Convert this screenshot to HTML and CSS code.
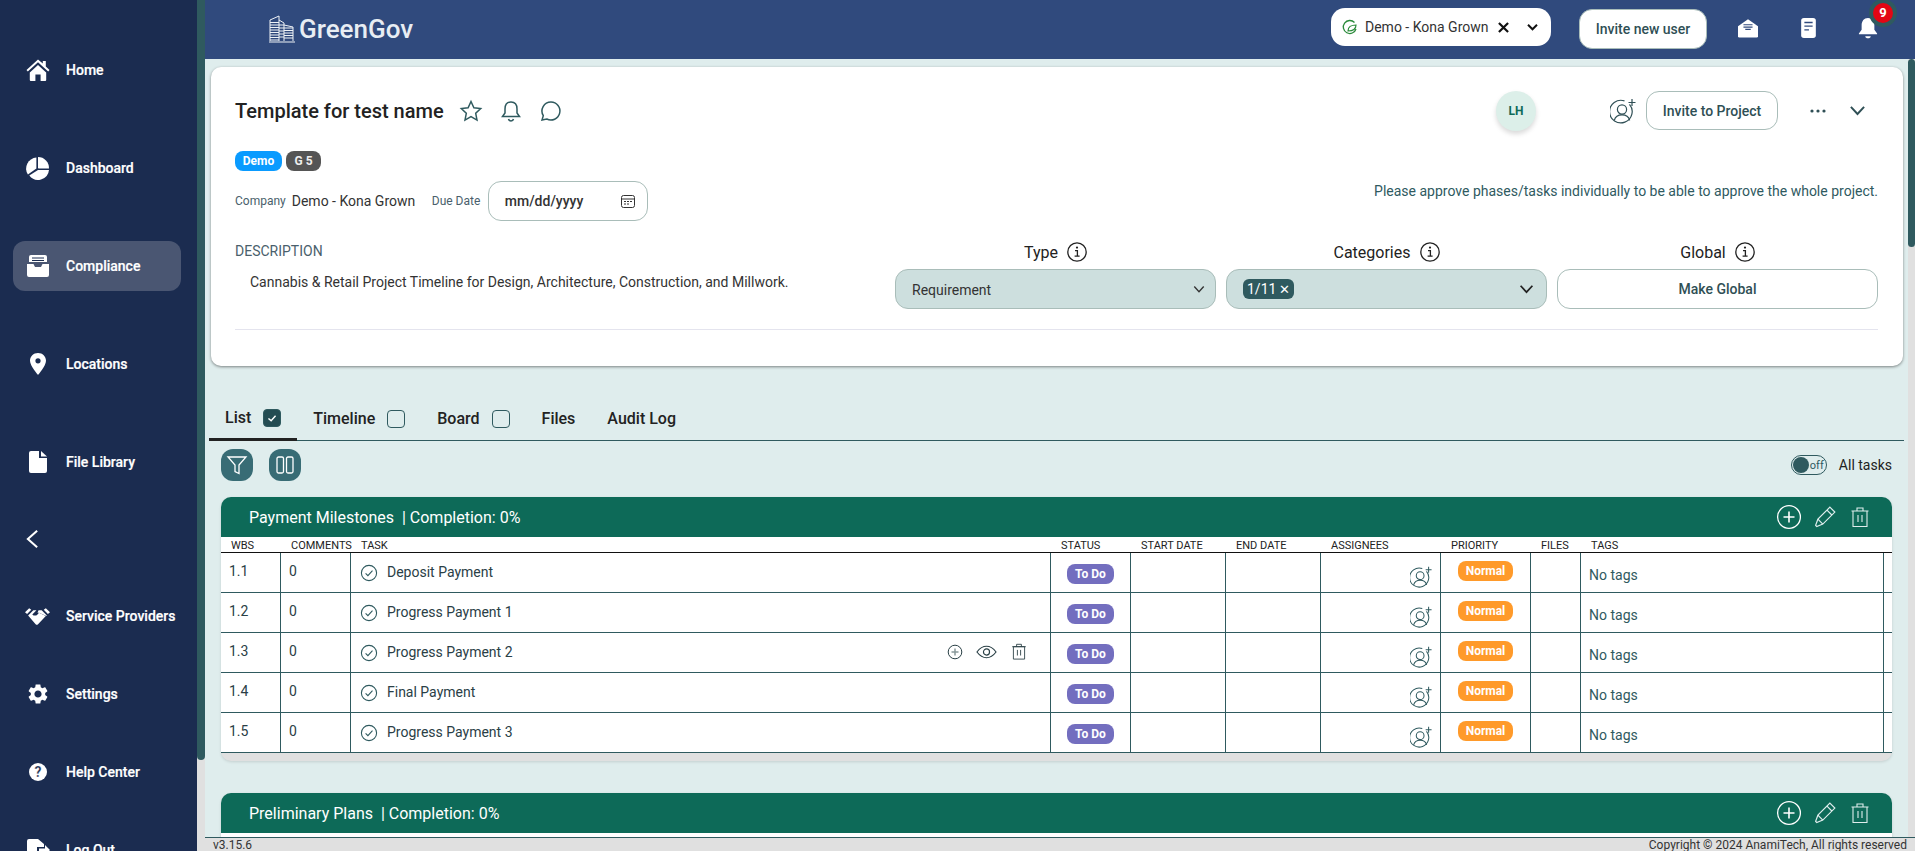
FILE: index.html
```html
<!DOCTYPE html>
<html lang="en">
<head>
<meta charset="utf-8">
<title>GreenGov</title>
<link rel="stylesheet" href="styles.css">
</head>
<body>
<svg class="sprite" width="0" height="0" aria-hidden="true">
  <symbol id="i-adduser" viewBox="0 0 26 26">
    <path d="M19.500 6.300A11.300 11.300 0 1 1 14.500 2.900" fill="none" stroke="currentColor" stroke-width="1.200"/>
    <circle cx="12" cy="11.500" r="4.600" fill="none" stroke="currentColor" stroke-width="1.200"/>
    <path d="M4.300 22.300c1-3.800 4.200-5.500 7.700-5.500s6.700 1.700 7.700 5.500" fill="none" stroke="currentColor" stroke-width="1.200"/>
    <path d="M22 1v7M18.500 4.500h7" stroke="currentColor" stroke-width="1.200"/>
  </symbol>
  <symbol id="i-info" viewBox="0 0 20 20">
    <circle cx="10" cy="10" r="9.200" fill="none" stroke="currentColor" stroke-width="1.300"/>
    <path d="M8 8.600h2.400v5.400M7.600 14.200h5" fill="none" stroke="currentColor" stroke-width="1.300"/>
    <circle cx="10" cy="5.600" r="1.100" fill="currentColor"/>
  </symbol>
  <symbol id="i-check" viewBox="0 0 18 18">
    <circle cx="9" cy="9" r="7.600" fill="none" stroke="currentColor" stroke-width="1.100"/>
    <path d="M5.600 9.400l2.300 2.300 4.600-5" fill="none" stroke="currentColor" stroke-width="1.100"/>
  </symbol>
  <symbol id="i-plus" viewBox="0 0 26 26">
    <circle cx="13" cy="13" r="11.400" fill="none" stroke="currentColor" stroke-width="1.300"/>
    <path d="M13 7.500v11M7.500 13h11" stroke="currentColor" stroke-width="1.600"/>
  </symbol>
  <symbol id="i-pencil" viewBox="0 0 22 22">
    <path d="M15.500 2l4.500 4.500L9 17.500l-5.600 2.200-1-1L4.500 13Z" fill="none" stroke="currentColor" stroke-width="1.100"/>
    <path d="M12.800 4.700l4.500 4.500M4.500 13l4.500 4.500" fill="none" stroke="currentColor" stroke-width="1.100"/>
  </symbol>
  <symbol id="i-trash" viewBox="0 0 20 22">
    <path d="M3 5h14v15.500H3ZM1.500 5h17M7 5V2h6v3M8 9v7M12 9v7" fill="none" stroke="currentColor" stroke-width="1.100"/>
  </symbol>
  <symbol id="i-chev" viewBox="0 0 14 10">
    <path d="M1.500 1.500l5.500 6 5.500-6" fill="none" stroke="currentColor" stroke-width="1.600"/>
  </symbol>
</svg>

<div class="app">
  <nav class="sidebar">
    <div class="nav-group nav-top">
      <a class="nav-item"><svg class="nav-icon" viewBox="0 0 24 24"><path fill="#fff" d="M12 1.500 .5 12l1.300 1.400L12 4.200l10.200 9.200 1.300-1.400-3.700-3.400V3h-3v2.600Z"/><path fill="#fff" d="M3.800 14.400 12 7l8.200 7.400V22a1 1 0 0 1-1 1h-4.600v-6.500H9.400V23H4.800a1 1 0 0 1-1-1Z"/></svg><span>Home</span></a>
      <a class="nav-item"><svg class="nav-icon" viewBox="0 0 24 24"><path fill="#fff" d="M10.400 1.600v11l-8.500 6A11 11 0 0 1 10.400 1.600Z"/><path fill="#fff" d="M12 1a11 11 0 0 1 11 11.500H12.500L12 12Z"/><path fill="#fff" d="M23 14a11 11 0 0 1-19.700 5.500L12 14Z"/></svg><span>Dashboard</span></a>
      <a class="nav-item is-active"><svg class="nav-icon" viewBox="0 0 24 24"><path fill="#fff" d="M5 1h14a2 2 0 0 1 2 2v5H3V3a2 2 0 0 1 2-2Z"/><path fill="#1b2c50" d="M6 3.500h12v1H6ZM6 6h12v1H6Z"/><path fill="#fff" d="M1 10h6.500l1.500 3h6l1.500-3H23v11a2 2 0 0 1-2 2H3a2 2 0 0 1-2-2Z"/></svg><span>Compliance</span></a>
      <a class="nav-item"><svg class="nav-icon" viewBox="0 0 24 24"><path fill="#fff" fill-rule="evenodd" d="M12 1c4.600 0 8 3.400 8 7.800C20 14 12 23 12 23S4 14 4 8.800C4 4.400 7.400 1 12 1Zm0 5.200a2.600 2.600 0 1 0 0 5.200 2.600 2.600 0 0 0 0-5.200Z"/></svg><span>Locations</span></a>
      <a class="nav-item"><svg class="nav-icon" viewBox="0 0 24 24"><path fill="#fff" d="M5 1h8v7h8v13a2 2 0 0 1-2 2H5a2 2 0 0 1-2-2V3a2 2 0 0 1 2-2Z"/><path fill="#fff" d="M15 1l6 5.500h-6Z"/></svg><span>File Library</span></a>
    </div>
    <div class="collapse"><svg class="collapse-icon" viewBox="0 0 14 22"><path d="M12 2 2 11l10 9" fill="none" stroke="#fff" stroke-width="2.200"/></svg></div>
    <div class="nav-group nav-bottom">
      <a class="nav-item"><svg class="nav-icon nav-icon-wide" viewBox="0 0 24 16"><path fill="#fff" d="M0 4l4-4 2 1.500-4 4ZM24 4l-4-4-2 1.500 4 4Z"/><path fill="#fff" d="M3 7l5-5h3L7 6c1.500 1.500 3.500 1.500 5 0l1.500-1.500 6.500 3-7.500 8c-.8.700-1.500.700-2.300 0Z"/><path fill="#fff" d="M13 2h3l5 5-.5.500-7-3.200h-1.500Z"/></svg><span>Service Providers</span></a>
      <a class="nav-item"><svg class="nav-icon" viewBox="0 0 24 24"><path fill="#fff" d="M19.140 12.940c.04-.3.06-.61.06-.94 0-.32-.02-.64-.07-.94l2.030-1.580c.18-.14.23-.41.12-.61l-1.920-3.320c-.12-.22-.37-.29-.59-.22l-2.390.96c-.5-.38-1.030-.7-1.620-.94l-.36-2.540c-.04-.24-.24-.41-.48-.41h-3.840c-.24 0-.43.17-.47.41l-.36 2.540c-.59.24-1.130.57-1.620.94l-2.390-.96c-.22-.08-.47 0-.59.22L2.740 8.870c-.12.21-.08.47.12.61l2.030 1.580c-.05.3-.09.63-.09.94s.02.64.07.94l-2.030 1.580c-.18.14-.23.41-.12.61l1.920 3.320c.12.22.37.29.59.22l2.390-.96c.5.38 1.030.7 1.620.94l.36 2.540c.05.24.24.41.48.41h3.840c.24 0 .44-.17.47-.41l.36-2.540c.59-.24 1.130-.56 1.620-.94l2.390.96c.22.08.47 0 .59-.22l1.920-3.320c.12-.22.07-.47-.12-.61l-2.010-1.580zM12 15.600c-1.980 0-3.600-1.620-3.600-3.600s1.620-3.600 3.600-3.600 3.600 1.620 3.600 3.600-1.620 3.600-3.600 3.600z"/></svg><span>Settings</span></a>
      <a class="nav-item"><span class="help-icon">?</span><span>Help Center</span></a>
      <a class="nav-item"><svg class="nav-icon" viewBox="0 0 24 24"><path fill="#fff" d="M3 1h9l6 5v3h-7v6h7v6a2 2 0 0 1-2 2H3a2 2 0 0 1-2-2V3a2 2 0 0 1 2-2Z"/><path fill="#fff" d="M13 10.500h6V7l5 5-5 5v-3.500h-6Z"/></svg><span>Log Out</span></a>
    </div>
  </nav>
  <div class="rail"><div class="rail-thumb"></div></div>

  <div class="main">
    <header class="topbar">
      <div class="logo">
        <svg class="logo-mark" viewBox="0 0 28 30">
          <g fill="none" stroke="#eef2f6" stroke-width="1">
            <path d="M2 27V6l9-4v25M11 6l5 3v18M16 11l9 2v14M1 28h26"/>
            <path d="M2 8.500h9M2 11h9M2 13.500h9M2 16h9M2 18.500h9M2 21h9M2 23.500h9M2 26h9M16 14h9M16 16.500h9M16 19h9M16 21.500h9M16 24h9M11 11h5M11 14h5M11 17h5M11 20h5M11 23h5"/>
          </g>
        </svg>
        <span class="logo-text">GreenGov</span>
      </div>
      <div class="org-select">
        <svg class="org-leaf" viewBox="0 0 16 16"><path d="M12.500 3.500A6.500 6.500 0 1 0 14 10" fill="none" stroke="#2a8a3a" stroke-width="1.300"/><path d="M6 12c0-4 3-6 8-6 0 4-3 6-8 6Z" fill="none" stroke="#2a8a3a" stroke-width="1.200"/></svg>
        <span class="org-name">Demo - Kona Grown</span>
        <svg class="org-x" viewBox="0 0 12 12"><path d="M1 1l10 10M11 1L1 11" stroke="#111" stroke-width="2.400"/></svg>
        <svg class="org-chev" viewBox="0 0 14 10"><path d="M2 2l5 5 5-5" fill="none" stroke="#111" stroke-width="2.200"/></svg>
      </div>
      <button class="invite-user">Invite new user</button>
      <svg class="top-icon top-mail" viewBox="0 0 24 22"><path fill="#fff" d="M1 9l11-7.500L23 9v11a1.500 1.500 0 0 1-1.500 1.500h-19A1.500 1.500 0 0 1 1 20Z"/><path d="M7 7.500h10M7 10h10M9 12.500h6" stroke="#304a7d" stroke-width="1.200"/></svg>
      <svg class="top-icon top-doc" viewBox="0 0 18 24"><rect x="1" y="1" width="16" height="22" rx="3" fill="#fff"/><path d="M4.500 6h9M4.500 10h9M4.500 14h5" stroke="#304a7d" stroke-width="1.500"/></svg>
      <div class="bell">
        <svg class="top-icon top-bell" viewBox="0 0 22 26"><path fill="#fff" d="M11 2c4.500 0 7 3.500 7 8v5l3 4v1H1v-1l3-4v-5c0-4.500 2.500-8 7-8Z"/><path fill="#fff" d="M8 22h6c0 3-6 3-6 0Z"/></svg>
        <span class="bell-count">9</span>
      </div>
    </header>

    <div class="body">
      <div class="content">
        <section class="card">
          <div class="card-top">
            <h1 class="title">Template for test name</h1>
            <svg class="title-icon star" viewBox="0 0 24 24"><path d="M12 2.500l2.900 6.300 6.800.8-5 4.700 1.300 6.800-6-3.400-6 3.400 1.300-6.800-5-4.700 6.800-.8Z" fill="none" stroke="#2f5a5f" stroke-width="1.500"/></svg>
            <svg class="title-icon" viewBox="0 0 24 24"><path d="M12 3c4 0 6 3 6 7v4l2.500 3.500h-17L6 14v-4c0-4 2-7 6-7ZM9.500 20c.5 2.500 4.500 2.500 5 0" fill="none" stroke="#2f5a5f" stroke-width="1.500"/></svg>
            <svg class="title-icon" viewBox="0 0 24 24"><path d="M12 3a9 9 0 1 1-4.200 17L3 21l1.300-4.300A9 9 0 0 1 12 3Z" fill="none" stroke="#2f5a5f" stroke-width="1.500"/></svg>
            <span class="avatar">LH</span>
            <svg class="add-user-top"><use href="#i-adduser"/></svg>
            <button class="invite-project">Invite to Project</button>
            <svg class="dots" viewBox="0 0 20 6"><circle cx="4" cy="3" r="1.600"/><circle cx="10" cy="3" r="1.600"/><circle cx="16" cy="3" r="1.600"/></svg>
            <svg class="card-chev"><use href="#i-chev"/></svg>
          </div>
          <div class="badges">
            <span class="badge badge-demo">Demo</span>
            <span class="badge badge-g">G 5</span>
          </div>
          <div class="meta">
            <span class="meta-label">Company</span>
            <span class="meta-value">Demo - Kona Grown</span>
            <span class="meta-label meta-due">Due Date</span>
            <div class="date-input">
              <span>mm/dd/yyyy</span>
              <svg class="cal" viewBox="0 0 16 16"><rect x="1.500" y="2.500" width="13" height="12" rx="2" fill="none" stroke="#333" stroke-width="1"/><path d="M1.500 6h13M4 8.500h2M7 8.500h2M10 8.500h2M4 11h2M7 11h2" stroke="#333" stroke-width="1"/></svg>
            </div>
            <span class="notice">Please approve phases/tasks individually to be able to approve the whole project.</span>
          </div>
          <div class="details">
            <div class="desc">
              <div class="desc-label">DESCRIPTION</div>
              <p class="desc-text">Cannabis &amp; Retail Project Timeline for Design, Architecture, Construction, and Millwork.</p>
            </div>
            <div class="field">
              <div class="field-label">Type<svg class="info"><use href="#i-info"/></svg></div>
              <div class="select"><span class="select-value">Requirement</span><svg class="select-chev"><use href="#i-chev"/></svg></div>
            </div>
            <div class="field">
              <div class="field-label">Categories<svg class="info"><use href="#i-info"/></svg></div>
              <div class="select"><span class="chip">1/11<span class="chip-x">&#10005;</span></span><svg class="select-chev strong"><use href="#i-chev"/></svg></div>
            </div>
            <div class="field">
              <div class="field-label">Global<svg class="info"><use href="#i-info"/></svg></div>
              <button class="make-global">Make Global</button>
            </div>
          </div>
          <div class="divider"></div>
        </section>

        <div class="tabs">
          <div class="tab is-active">List<span class="tab-box is-checked"><svg viewBox="0 0 18 18"><path d="M5 9.500l3 2.500 5-5.500" fill="none" stroke="#fff" stroke-width="1.600"/></svg></span></div>
          <div class="tab">Timeline<span class="tab-box"></span></div>
          <div class="tab">Board<span class="tab-box"></span></div>
          <div class="tab">Files</div>
          <div class="tab">Audit Log</div>
        </div>

        <div class="toolbar">
          <button class="tool"><svg viewBox="0 0 22 22"><path d="M2 3h18l-7 8v8.500l-4-2V11Z" fill="none" stroke="#fff" stroke-width="1.300"/></svg></button>
          <button class="tool"><svg viewBox="0 0 22 22"><rect x="3" y="3" width="6.500" height="16" rx="1.500" fill="none" stroke="#fff" stroke-width="1.300"/><rect x="12.500" y="3" width="6.500" height="16" rx="1.500" fill="none" stroke="#fff" stroke-width="1.300"/></svg></button>
          <div class="toggle-wrap">
            <span class="toggle"><span class="knob"></span><span class="toggle-text">off</span></span>
            <span class="toggle-label">All tasks</span>
          </div>
        </div>

        <section class="panel">
          <div class="panel-head">
            <span class="panel-title">Payment Milestones &nbsp;| Completion: 0%</span>
            <svg class="ph-plus"><use href="#i-plus"/></svg>
            <svg class="ph-pencil"><use href="#i-pencil"/></svg>
            <svg class="ph-trash"><use href="#i-trash"/></svg>
          </div>
          <div class="grid grid-head">
            <span>WBS</span><span>COMMENTS</span><span>TASK</span><span>STATUS</span><span>START DATE</span><span>END DATE</span><span>ASSIGNEES</span><span>PRIORITY</span><span>FILES</span><span>TAGS</span><span></span>
          </div>
          <div class="grid grid-row">
            <div class="cell c-num">1.1</div><div class="cell c-num">0</div>
            <div class="cell c-task"><svg class="task-check"><use href="#i-check"/></svg>Deposit Payment</div>
            <div class="cell c-status"><span class="pill todo">To Do</span></div><div class="cell"></div><div class="cell"></div>
            <div class="cell c-assign"><svg class="row-add"><use href="#i-adduser"/></svg></div>
            <div class="cell c-prio"><span class="pill normal">Normal</span></div><div class="cell"></div>
            <div class="cell c-tags">No tags</div><div class="cell c-last"></div>
          </div>
          <div class="grid grid-row">
            <div class="cell c-num">1.2</div><div class="cell c-num">0</div>
            <div class="cell c-task"><svg class="task-check"><use href="#i-check"/></svg>Progress Payment 1</div>
            <div class="cell c-status"><span class="pill todo">To Do</span></div><div class="cell"></div><div class="cell"></div>
            <div class="cell c-assign"><svg class="row-add"><use href="#i-adduser"/></svg></div>
            <div class="cell c-prio"><span class="pill normal">Normal</span></div><div class="cell"></div>
            <div class="cell c-tags">No tags</div><div class="cell c-last"></div>
          </div>
          <div class="grid grid-row">
            <div class="cell c-num">1.3</div><div class="cell c-num">0</div>
            <div class="cell c-task"><svg class="task-check"><use href="#i-check"/></svg>Progress Payment 2
              <span class="row-actions">
                <svg class="ra-plus" viewBox="0 0 16 16"><circle cx="8" cy="8" r="6.800" fill="none" stroke="currentColor"/><path d="M8 4.500v7M4.500 8h7" stroke="#8a9a9c" stroke-width="1.500"/></svg>
                <svg class="ra-eye" viewBox="0 0 22 14"><path d="M1 7c3-4 6-6 10-6s7 2 10 6c-3 4-6 6-10 6S4 11 1 7Z" fill="none" stroke="currentColor" stroke-width="1.200"/><circle cx="11" cy="7" r="3.200" fill="none" stroke="currentColor" stroke-width="1.200"/></svg>
                <svg class="ra-trash"><use href="#i-trash"/></svg>
              </span>
            </div>
            <div class="cell c-status"><span class="pill todo">To Do</span></div><div class="cell"></div><div class="cell"></div>
            <div class="cell c-assign"><svg class="row-add"><use href="#i-adduser"/></svg></div>
            <div class="cell c-prio"><span class="pill normal">Normal</span></div><div class="cell"></div>
            <div class="cell c-tags">No tags</div><div class="cell c-last"></div>
          </div>
          <div class="grid grid-row">
            <div class="cell c-num">1.4</div><div class="cell c-num">0</div>
            <div class="cell c-task"><svg class="task-check"><use href="#i-check"/></svg>Final Payment</div>
            <div class="cell c-status"><span class="pill todo">To Do</span></div><div class="cell"></div><div class="cell"></div>
            <div class="cell c-assign"><svg class="row-add"><use href="#i-adduser"/></svg></div>
            <div class="cell c-prio"><span class="pill normal">Normal</span></div><div class="cell"></div>
            <div class="cell c-tags">No tags</div><div class="cell c-last"></div>
          </div>
          <div class="grid grid-row">
            <div class="cell c-num">1.5</div><div class="cell c-num">0</div>
            <div class="cell c-task"><svg class="task-check"><use href="#i-check"/></svg>Progress Payment 3</div>
            <div class="cell c-status"><span class="pill todo">To Do</span></div><div class="cell"></div><div class="cell"></div>
            <div class="cell c-assign"><svg class="row-add"><use href="#i-adduser"/></svg></div>
            <div class="cell c-prio"><span class="pill normal">Normal</span></div><div class="cell"></div>
            <div class="cell c-tags">No tags</div><div class="cell c-last"></div>
          </div>
        </section>

        <section class="panel panel-next">
          <div class="panel-head">
            <span class="panel-title">Preliminary Plans &nbsp;| Completion: 0%</span>
            <svg class="ph-plus"><use href="#i-plus"/></svg>
            <svg class="ph-pencil"><use href="#i-pencil"/></svg>
            <svg class="ph-trash"><use href="#i-trash"/></svg>
          </div>
          <div class="grid grid-head"></div>
        </section>
      </div>
      <div class="vscroll"><div class="vscroll-thumb"></div></div>
    </div>

    <footer class="footer">
      <span>v3.15.6</span>
      <span>Copyright © 2024 AnamiTech, All rights reserved</span>
    </footer>
  </div>
</div>
</body>
</html>
```
FILE: styles.css
```css
* { box-sizing: border-box; }
html, body { margin: 0; height: 851px; overflow: hidden; }
body { font-family: Roboto, "Liberation Sans", sans-serif; color: #222; background: #dfeded; }
button { font-family: inherit; cursor: pointer; }
.sprite { position: absolute; }

.app { display: flex; height: 851px; overflow: hidden; }

/* Sidebar */
.sidebar { width: 197px; flex: none; background: #1b2c50; padding-top: 45px; overflow: hidden; }
.nav-group { display: flex; flex-direction: column; }
.nav-top { gap: 48px; }
.nav-bottom { gap: 28px; }
.nav-item { height: 50px; width: 168px; margin-left: 13px; padding-left: 13px; display: flex; align-items: center; gap: 16px; border-radius: 12px; color: #fff; font-size: 14px; font-weight: 500; -webkit-text-stroke: .2px #fff; }
.nav-item.is-active { background: #4a5672; }
.nav-icon { width: 24px; height: 24px; flex: none; }
.nav-icon-wide { width: 25px; height: 17px; margin-left: -1px; }
.help-icon { width: 18px; height: 18px; margin: 0 3px; flex: none; border-radius: 50%; background: #fff; color: #1b2c50; font-size: 14px; font-weight: 700; line-height: 18px; text-align: center; }
.collapse { height: 24px; margin: 40px 0 40px 26px; display: flex; align-items: center; }
.collapse-icon { width: 13px; height: 22px; }

.rail { width: 8px; flex: none; background: #e0e0e0; }
.rail-thumb { height: 760px; background: #2f5a5f; border-radius: 0 0 4px 4px; }

/* Main */
.main { flex: 1; min-width: 0; display: flex; flex-direction: column; height: 851px; }
.topbar { height: 59px; flex: none; background: #304a7d; display: flex; align-items: flex-start; padding-left: 63px; }
.logo { display: flex; align-items: center; height: 36px; margin-top: 11px; gap: 3px; }
.logo-mark { width: 28px; height: 32px; }
.logo-text { font-size: 26px; font-weight: 500; color: #e8edf3; width: 115px; white-space: nowrap; }
.org-select { width: 220px; height: 38px; margin: 8px 0 0 917px; background: #fff; border-radius: 14px; display: flex; align-items: center; padding-left: 11px; }
.org-leaf { width: 16px; height: 16px; flex: none; }
.org-name { font-size: 14px; color: #333; margin-left: 7px; width: 127px; white-space: nowrap; }
.org-x { width: 11px; height: 11px; margin-left: 6px; }
.org-chev { width: 13px; height: 9px; margin-left: 17px; }
.invite-user { width: 128px; height: 40px; margin: 9px 0 0 28px; background: #fff; border: 1px solid #a9bdb9; border-radius: 13px; font-size: 14px; font-weight: 500; color: #2f4f55; padding: 0; }
.top-icon { flex: none; }
.top-mail { width: 22px; height: 20px; margin: 18px 0 0 30px; }
.top-doc { width: 17px; height: 22px; margin: 17px 0 0 41px; }
.bell { display: flex; margin-left: 41px; position: relative; }
.top-bell { width: 20px; height: 24px; margin-top: 16px; }
.bell-count { position: absolute; left: 11px; top: -1px; width: 28px; height: 28px; background: #e30613; border: 4px solid #2f5a5f; border-radius: 50%; color: #fff; font-size: 13px; font-weight: 700; line-height: 20px; text-align: center; }

.body { flex: 1; min-height: 0; display: flex; }
.content { flex: 1; min-width: 0; padding: 8px 5px 0 6px; overflow: hidden; }
.vscroll { width: 7px; flex: none; background: #e0e0e0; }
.vscroll-thumb { height: 188px; background: #2f5a5f; border-radius: 4px; }

.footer { height: 14px; flex: none; background: #e0e0e0; border-top: 1px solid #2f5a5f; display: flex; justify-content: space-between; padding: 0 8px; font-size: 12px; line-height: 15px; color: #333; overflow: hidden; }

/* Card */
.card { height: 299px; background: #fff; border-radius: 10px; box-shadow: 0 1px 3px rgba(0,0,0,.45); padding: 24px 25px 0 24px; }
.card-top { display: flex; align-items: center; height: 39px; }
.title { margin: 0; font-size: 20px; font-weight: 500; color: #222; white-space: nowrap; width: 213px; }
.title-icon { width: 24px; height: 24px; margin-right: 16px; flex: none; }
.star { margin-left: 11px; }
.avatar { width: 40px; height: 40px; margin-left: 917px; flex: none; border-radius: 50%; background: #dcefe9; box-shadow: 0 3px 5px rgba(0,0,0,.15); color: #0d6a58; font-size: 12px; font-weight: 700; line-height: 40px; text-align: center; }
.add-user-top { width: 26px; height: 26px; margin-left: 74px; color: #2f4f55; flex: none; }
.invite-project { width: 132px; height: 39px; margin-left: 10px; background: #fff; border: 1px solid #a9bdb9; border-radius: 13px; font-size: 14px; font-weight: 500; color: #2f4f55; padding: 0; flex: none; }
.dots { width: 20px; height: 6px; margin-left: 30px; fill: #2f4f55; flex: none; }
.card-chev { width: 17px; height: 12px; margin-left: 21px; color: #2f4f55; flex: none; }

.badges { display: flex; gap: 4px; margin-top: 21px; }
.badge { height: 20px; border-radius: 8px; color: #fff; font-size: 12px; font-weight: 700; line-height: 20px; text-align: center; }
.badge-demo { width: 47px; background: #0a9bff; }
.badge-g { width: 35px; background: #555; color: #eee; }

.meta { display: flex; align-items: center; height: 40px; margin-top: 10px; }
.meta-label { font-size: 12px; color: #4a5f6c; white-space: nowrap; }
.meta-value { font-size: 14px; color: #333; margin-left: 6px; white-space: nowrap; width: 123px; }
.meta-due { margin-left: 17px; width: 56px; }
.date-input { width: 160px; height: 40px; border: 1px solid #a9bdb9; border-radius: 13px; display: flex; align-items: center; justify-content: space-between; padding: 0 11px 0 16px; font-size: 14px; font-weight: 500; color: #333; }
.cal { width: 16px; height: 16px; }
.notice { margin-left: auto; align-self: flex-start; font-size: 14px; line-height: 20px; color: #2f5a5f; white-space: nowrap; }

.details { display: flex; gap: 10px; margin-top: 21px; }
.desc { width: 650px; flex: none; }
.desc-label { font-size: 14px; line-height: 18px; color: #4a5f6c; }
.desc-text { margin: 12px 0 0; padding-left: 15px; font-size: 14px; line-height: 20px; color: #333; white-space: nowrap; }
.field { width: 321px; flex: none; }
.field-label { height: 20px; display: flex; justify-content: center; align-items: center; gap: 9px; font-size: 16px; color: #222; }
.info { width: 20px; height: 20px; color: #222; }
.select { height: 40px; margin-top: 7px; background: #cddfde; border: 1px solid #a9bdb9; border-radius: 13px; display: flex; align-items: center; justify-content: space-between; padding: 0 10px 0 16px; color: #333; }
.select-value { font-size: 14px; padding-top: 2px; }
.select-chev { width: 12px; height: 9px; color: #333; }
.select-chev.strong { width: 15px; height: 11px; margin-right: 2px; color: #222; }
.chip { background: #2f5a5f; color: #fff; font-size: 14px; line-height: 20px; height: 20px; padding: 0 4px; border-radius: 6px; white-space: nowrap; }
.chip-x { font-size: 13px; margin-left: 3px; }
.make-global { display: block; width: 100%; height: 40px; margin-top: 7px; background: #fff; border: 1px solid #a9bdb9; border-radius: 13px; font-size: 14px; font-weight: 500; color: #2f4f55; }
.divider { height: 1px; margin-top: 20px; background: #e4e4ee; }

/* Tabs */
.tabs { display: flex; height: 46px; margin: 29px -1px 0 -2px; border-bottom: 1px solid #2f5a5f; }
.tab { height: 46px; padding: 2px 16px 2px; display: flex; align-items: center; gap: 12px; font-size: 16px; font-weight: 500; color: #222; white-space: nowrap; }
.tab.is-active { border-bottom: 3px solid #222; padding-bottom: 0; }
.tab-box { width: 18px; height: 18px; border: 1px solid #2f5a5f; border-radius: 4px; margin-top: 1px; }
.tab-box.is-checked { background: #244c52; }
.tab-box svg { display: block; width: 16px; height: 16px; }

.toolbar { display: flex; align-items: center; gap: 16px; margin: 8px 11px 16px 10px; height: 32px; }
.tool { width: 32px; height: 32px; padding: 5px; background: #386c75; border: 0; border-radius: 12px; }
.tool svg { display: block; width: 22px; height: 22px; }
.toggle-wrap { margin-left: auto; display: flex; align-items: center; gap: 12px; }
.toggle { width: 36px; height: 20px; border: 1px solid #2f5a5f; border-radius: 10px; display: flex; align-items: center; padding-left: 1px; }
.knob { width: 16px; height: 16px; border-radius: 50%; background: #2f5a5f; flex: none; }
.toggle-text { font-size: 11px; color: #2f5a5f; margin-left: 1px; }
.toggle-label { font-size: 14px; color: #222; }

/* Panels */
.panel { margin: 0 11px 0 10px; background: #e0e0e0; border-radius: 10px; padding-bottom: 8px; box-shadow: 0 1px 3px rgba(0,0,0,.12); }
.panel-next { margin-top: 32px; }
.panel-head { height: 40px; background: #0d6a58; border-radius: 10px 10px 0 0; display: flex; align-items: center; padding-left: 28px; color: #fff; }
.panel-title { font-size: 16px; margin-right: auto; white-space: nowrap; }
.ph-plus { width: 26px; height: 26px; color: #fff; margin-right: 11px; flex: none; }
.ph-pencil { width: 24px; height: 24px; color: #dfeded; margin-right: 13px; flex: none; }
.ph-trash { width: 20px; height: 22px; color: #dfeded; margin-right: 22px; flex: none; }

.grid { display: grid; grid-template-columns: 60px 70px 700px 80px 95px 95px 120px 90px 50px 303px 1fr; background: #fff; }
.grid-head { height: 16px; border-bottom: 1px solid #111; font-size: 11px; line-height: 14px; color: #222; }
.grid-head span { padding: 2px 0 0 10px; white-space: nowrap; }
.grid-row { height: 40px; border-bottom: 1px solid #2f5a5f; font-size: 14px; color: #2a4046; }
.cell { border-right: 1px solid #2f5a5f; }
.c-last { border-right: 0; }
.c-num { padding: 8px 0 0 8px; line-height: 20px; }
.c-task { display: flex; align-items: flex-start; padding: 9px 0 0 9px; line-height: 20px; }
.task-check { width: 18px; height: 18px; margin: 2px 9px 0 0; color: #2f5a5f; flex: none; }
.row-actions { display: flex; align-items: center; margin-left: auto; color: #2a4046; }
.ra-plus { width: 16px; height: 16px; }
.ra-eye { width: 21px; height: 14px; margin-left: 13px; }
.ra-trash { width: 16px; height: 19px; margin: 0 23px 0 14px; }
.c-status { padding: 11px 0 0 16px; }
.c-assign { display: flex; justify-content: flex-end; padding: 13px 8px 0 0; }
.row-add { width: 22px; height: 22px; color: #2f5a5f; }
.c-prio { padding: 8px 0 0 17px; }
.pill { display: block; height: 20px; border-radius: 8px; color: #fff; font-size: 12px; font-weight: 700; line-height: 20px; text-align: center; }
.todo { width: 47px; background: #736ebf; }
.normal { width: 55px; background: #ff9a2a; }
.c-tags { padding: 12px 0 0 8px; line-height: 20px; color: #2f5a5f; }
```
